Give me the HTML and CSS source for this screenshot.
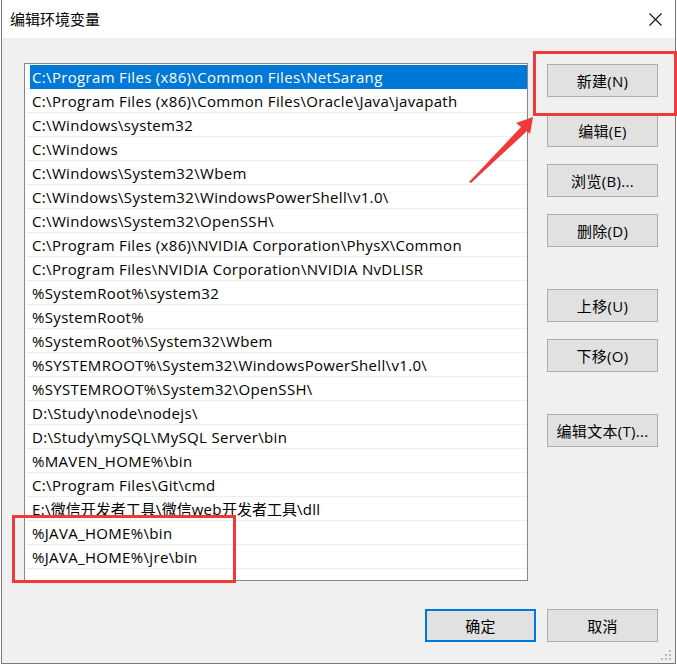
FILE: index.html
```html
<!DOCTYPE html>
<html lang="zh-CN">
<head>
<meta charset="utf-8">
<title>编辑环境变量</title>
<link rel="stylesheet" href="styles.css">
</head>
<body>
<div class="dialog">
  <div class="titlebar">
    <span class="title">编辑环境变量</span>
    <svg class="close" width="13" height="13" viewBox="0 0 13 13"><path d="M0.5 0.5 L12.5 12.5 M12.5 0.5 L0.5 12.5" stroke="#111" stroke-width="1.1" fill="none"/></svg>
  </div>
  <div class="main">
    <div class="listbox">
      <div class="row selected"><span class="label">C:\Program Files (x86)\Common Files\NetSarang</span></div>
      <div class="row"><span class="label">C:\Program Files (x86)\Common Files\Oracle\Java\javapath</span></div>
      <div class="row"><span class="label">C:\Windows\system32</span></div>
      <div class="row"><span class="label">C:\Windows</span></div>
      <div class="row"><span class="label">C:\Windows\System32\Wbem</span></div>
      <div class="row"><span class="label">C:\Windows\System32\WindowsPowerShell\v1.0\</span></div>
      <div class="row"><span class="label">C:\Windows\System32\OpenSSH\</span></div>
      <div class="row"><span class="label">C:\Program Files (x86)\NVIDIA Corporation\PhysX\Common</span></div>
      <div class="row"><span class="label">C:\Program Files\NVIDIA Corporation\NVIDIA NvDLISR</span></div>
      <div class="row"><span class="label">%SystemRoot%\system32</span></div>
      <div class="row"><span class="label">%SystemRoot%</span></div>
      <div class="row"><span class="label">%SystemRoot%\System32\Wbem</span></div>
      <div class="row"><span class="label">%SYSTEMROOT%\System32\WindowsPowerShell\v1.0\</span></div>
      <div class="row"><span class="label">%SYSTEMROOT%\System32\OpenSSH\</span></div>
      <div class="row"><span class="label">D:\Study\node\nodejs\</span></div>
      <div class="row"><span class="label">D:\Study\mySQL\MySQL Server\bin</span></div>
      <div class="row"><span class="label">%MAVEN_HOME%\bin</span></div>
      <div class="row"><span class="label">C:\Program Files\Git\cmd</span></div>
      <div class="row"><span class="label">E:\<span class="cjk">微信开发者工具</span>\<span class="cjk">微信</span>web<span class="cjk">开发者工具</span>\dll</span></div>
      <div class="row"><span class="label">%JAVA_HOME%\bin</span></div>
      <div class="row"><span class="label">%JAVA_HOME%\jre\bin</span></div>
    </div>
    <div class="side">
      <button class="btn">新建(N)</button>
      <button class="btn">编辑(E)</button>
      <button class="btn">浏览(B)...</button>
      <button class="btn">删除(D)</button>
      <button class="btn group">上移(U)</button>
      <button class="btn">下移(O)</button>
      <button class="btn group">编辑文本(T)...</button>
    </div>
  </div>
  <div class="footer">
    <button class="btn primary">确定</button>
    <button class="btn">取消</button>
  </div>
  <div class="grip">
    <i class="d1"></i><i class="d2"></i><i class="d3"></i><i class="d4"></i><i class="d5"></i><i class="d6"></i>
  </div>
</div>
<div class="mark mark-top"></div>
<div class="mark mark-bottom"></div>
<svg class="arrow" width="677" height="664" viewBox="0 0 677 664">
  <polygon points="533,117 516,123 521,127 469,182 471,183 527,131 530,134" fill="#f03a3a"/>
</svg>
</body>
</html>
```
FILE: styles.css
```css
* { box-sizing: border-box; }
html, body { margin: 0; padding: 0; background: #ffffff; }
body {
  width: 677px;
  height: 664px;
  position: relative;
  overflow: hidden;
  font-family: "Open Sans", "Noto Sans CJK SC", sans-serif;
  font-size: 15px;
  color: #000;
}
.dialog {
  position: relative;
  margin-left: 1px;
  width: 675px;
  height: 664px;
  background: #f0f0f0;
  border-left: 1px solid #7a7a7a;
  border-right: 1px solid #7a7a7a;
  border-bottom: 1px solid #7a7a7a;
  display: flex;
  flex-direction: column;
}
.titlebar {
  height: 38px;
  background: #ffffff;
  display: flex;
  align-items: center;
  justify-content: space-between;
  padding-left: 8px;
  padding-right: 13px;
  flex: none;
}
.title {
  font-family: "Noto Sans CJK SC", sans-serif;
  font-size: 15px;
  line-height: 20px;
}
.close { display: block; }
.main {
  display: flex;
  padding-top: 25px;
  padding-left: 22px;
  flex: none;
}
.listbox {
  width: 504px;
  height: 518px;
  background: #ffffff;
  border: 1px solid #828790;
  padding-top: 1px;
  flex: none;
}
.row {
  height: 24px;
  border-bottom: 1px solid #ededed;
  margin-left: 1px;
}
.label {
  display: block;
  margin-left: 4px;
  height: 23px;
  line-height: 23px;
  padding-left: 2px;
  padding-top: 1px;
  white-space: nowrap;
  overflow: hidden;
  letter-spacing: 0.33px;
}
.label .cjk { letter-spacing: 0; }
.row.selected .label {
  background: #0078d7;
  color: #ffffff;
  height: 24px;
}
.side {
  display: flex;
  flex-direction: column;
  margin-left: 19px;
  padding-top: 1px;
  gap: 17px;
}
.btn {
  width: 111px;
  height: 33px;
  background: #e1e1e1;
  border: 1px solid #adadad;
  font-family: "Open Sans", "Noto Sans CJK SC", sans-serif;
  font-size: 15px;
  color: #000;
  padding: 0;
  margin: 0;
  line-height: 20px;
  letter-spacing: 0.3px;
}
.btn.group { margin-top: 25px; }
.btn.primary { border: 2px solid #0078d7; }
.footer {
  display: flex;
  justify-content: flex-end;
  gap: 11px;
  padding-right: 17px;
  margin-top: 28px;
}
.grip {
  position: absolute;
  right: 2px;
  bottom: 1px;
  width: 12px;
  height: 12px;
}
.grip i {
  position: absolute;
  width: 2px;
  height: 2px;
  background: #bcbcbc;
}
.grip .d1 { left: 8px; top: 0; }
.grip .d2 { left: 4px; top: 4px; }
.grip .d3 { left: 8px; top: 4px; }
.grip .d4 { left: 0; top: 8px; }
.grip .d5 { left: 4px; top: 8px; }
.grip .d6 { left: 8px; top: 8px; }
.mark {
  position: absolute;
  border: 3px solid #f03a3a;
}
.mark-top { left: 533px; top: 51px; width: 144px; height: 65px; }
.mark-bottom { left: 12px; top: 515px; width: 224px; height: 68px; }
.arrow { position: absolute; left: 0; top: 0; pointer-events: none; }
```
